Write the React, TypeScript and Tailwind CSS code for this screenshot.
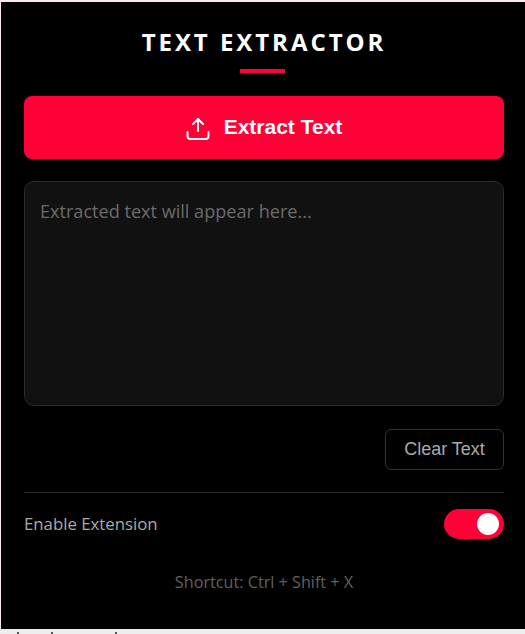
import React, { useState } from 'react';

// Small upload icon used on the main action button
function UploadIcon() {
  return (
    <svg width="24" height="24" viewBox="0 0 24 24" fill="none" stroke="currentColor" strokeWidth="2" strokeLinecap="round" strokeLinejoin="round">
      <path d="M12 15V3" />
      <path d="M7 8l5-5 5 5" />
      <path d="M1.5 16v4a3 3 0 0 0 3 3h15a3 3 0 0 0 3-3v-4" />
    </svg>
  );
}

export default function App() {
  const [enabled, setEnabled] = useState(true);
  const [text, setText] = useState('');

  return (
    <div className="h-[634px] w-[525px] overflow-hidden bg-[#fbe9ec] pt-[2px] pl-[1px] font-['Open_Sans',sans-serif]">
      <div className="flex h-[627px] w-[524px] flex-col bg-black pt-[23px] pr-[21px] pl-[23px]">
        {/* Header */}
        <h1 className="text-center text-[24px] leading-[33px] font-bold tracking-[2.95px] text-white">TEXT EXTRACTOR</h1>
        <div className="mt-[11px] ml-[216px] h-[4px] w-[45px] bg-[#ff0037]" />

        {/* Main action */}
        <button className="mt-[23px] flex h-[63px] w-full items-center justify-center gap-[14px] rounded-[8px] bg-[#ff0037] font-['Liberation_Sans',sans-serif] text-[21px] leading-none font-bold text-white">
          <UploadIcon />
          <span className="-mt-[2px]">Extract Text</span>
        </button>

        <textarea
          value={text}
          onChange={(e) => setText(e.target.value)}
          placeholder="Extracted text will appear here..."
          className="mt-[22px] h-[225px] w-full resize-none rounded-[10px] border border-[#2a2a2a] bg-[#111111] px-[15px] py-[16px] text-[18.1px] leading-[26px] text-white outline-none placeholder:text-[#6b6b6b]"
        />

        <div className="mt-[23px] flex justify-end">
          <button onClick={() => setText('')} className="h-[41px] w-[119px] rounded-[6px] border border-[#333333] font-['Liberation_Sans',sans-serif] text-[18px] text-[#aaaaaa]">
            Clear Text
          </button>
        </div>

        <div className="mt-[22px] flex h-[62px] items-center justify-between border-t border-[#2a2a2a]">
          <span className="text-[16.8px] text-[#aaaaaa]">Enable Extension</span>
          <button
            onClick={() => setEnabled(!enabled)}
            className={`flex h-[30px] w-[60px] items-center rounded-full px-[5px] ${enabled ? 'justify-end bg-[#ff0037]' : 'justify-start bg-[#333333]'}`}
          >
            <span className="h-[22px] w-[22px] rounded-full bg-white" />
          </button>
        </div>

        <p className="mt-[16px] text-center text-[16.2px] text-[#606060]">Shortcut: Ctrl + Shift + X</p>
      </div>

      {/* Strip of the page behind the popup */}
      <div className="-ml-[1px] flex h-[5px] items-end bg-[#eeeeee]">
        <span className="ml-[17px] h-[2px] w-[2px] bg-[#555555]" />
        <span className="ml-[32px] h-[2px] w-[2px] bg-[#555555]" />
        <span className="ml-[62px] h-[2px] w-[2px] bg-[#555555]" />
      </div>
    </div>
  );
}
